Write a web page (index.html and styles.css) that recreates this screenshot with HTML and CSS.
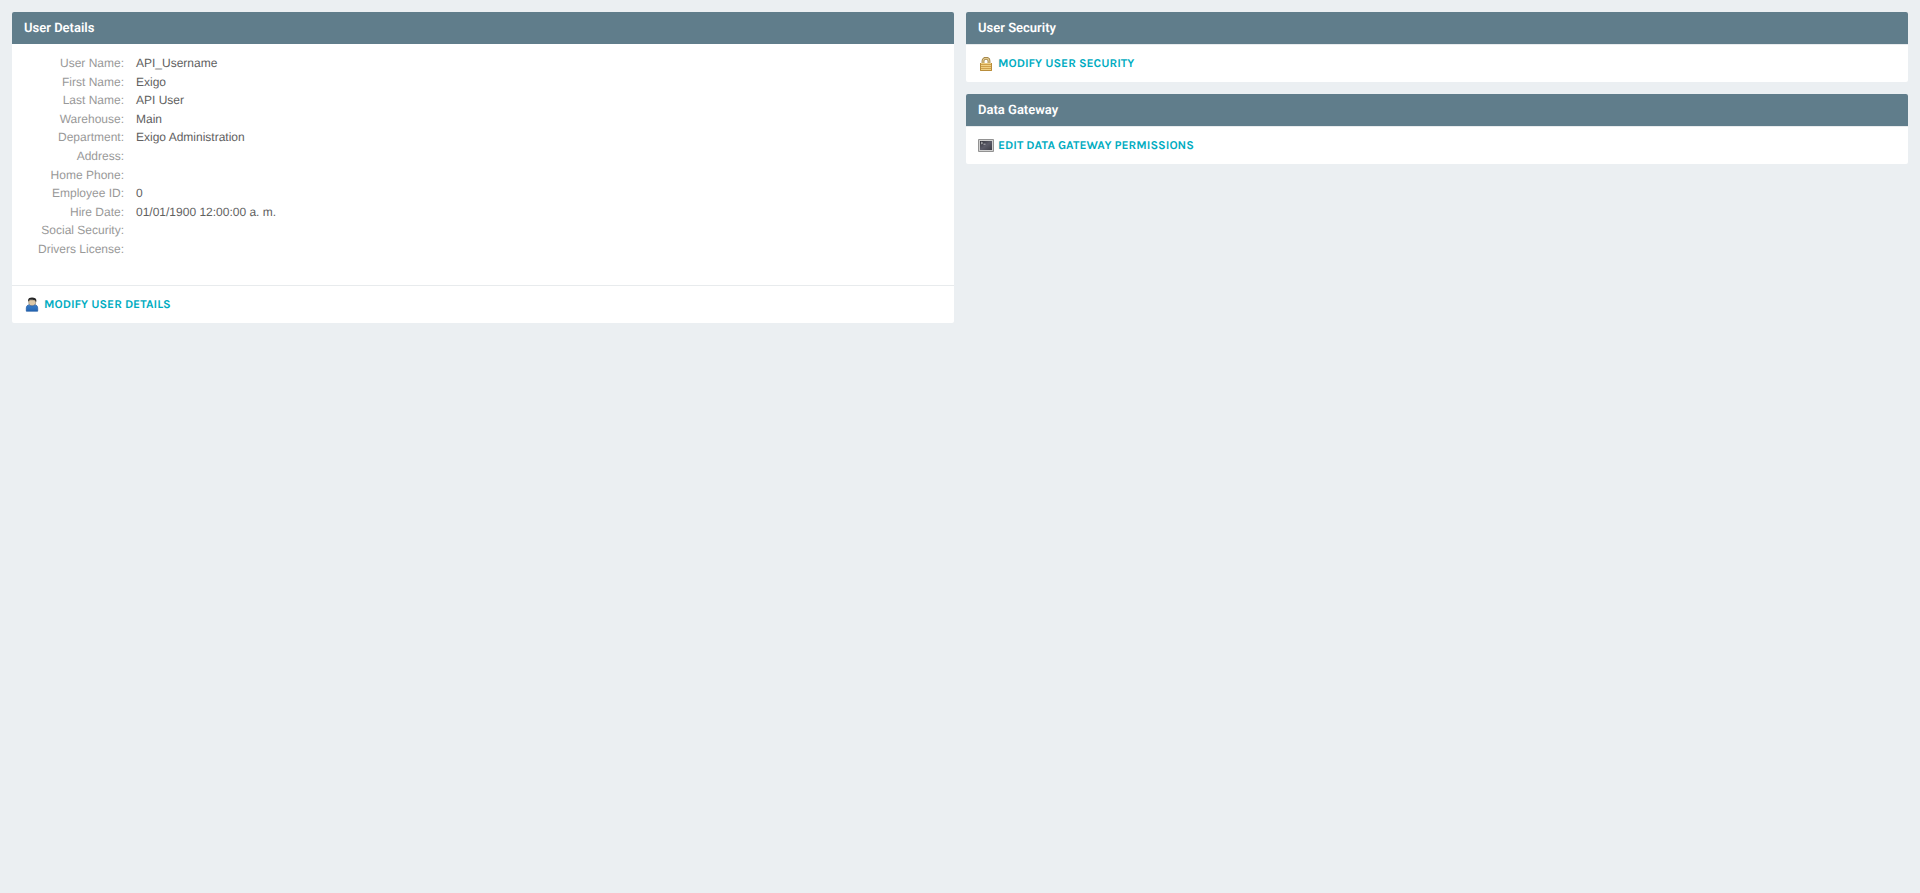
FILE: index.html
```html
<!DOCTYPE html>
<html lang="en">
<head>
    <meta charset="UTF-8">
    <meta name="viewport" content="width=device-width, initial-scale=1">
    <title>User Details</title>
    <link rel="stylesheet" href="styles.css">
</head>
<body>
    <main class="columns">
        <div class="column">
            <!-- User Details -->
            <section class="panel">
                <h2 class="panel-heading">User Details</h2>
                <dl class="details">
                    <dt>User Name:</dt>
                    <dd>API_Username</dd>
                    <dt>First Name:</dt>
                    <dd>Exigo</dd>
                    <dt>Last Name:</dt>
                    <dd>API User</dd>
                    <dt>Warehouse:</dt>
                    <dd>Main</dd>
                    <dt>Department:</dt>
                    <dd>Exigo Administration</dd>
                    <dt>Address:</dt>
                    <dd></dd>
                    <dt>Home Phone:</dt>
                    <dd></dd>
                    <dt>Employee ID:</dt>
                    <dd>0</dd>
                    <dt>Hire Date:</dt>
                    <dd>01/01/1900 12:00:00 a. m.</dd>
                    <dt>Social Security:</dt>
                    <dd></dd>
                    <dt>Drivers License:</dt>
                    <dd></dd>
                </dl>
                <div class="panel-footer">
                    <a href="#">
                        <svg class="icon" viewBox="0 0 16 16" aria-hidden="true">
                            <defs>
                                <linearGradient id="shirt" x1="0" y1="0" x2="0" y2="1">
                                    <stop offset="0" stop-color="#3a7cc6"/>
                                    <stop offset="1" stop-color="#2466b4"/>
                                </linearGradient>
                            </defs>
                            <path d="M4.800 3h6.800v3c0 2-1.300 3.300-3.300 3.300S4.800 8 4.800 6z" fill="#dcc7a6" stroke="#7d6a50" stroke-width=".5"/>
                            <path d="M2.300 14.200v-3c0-2.200 1.200-3.300 3-3.300.8 1.300 4.600 1.300 5.400 0 1.800 0 3 1.100 3 3.300v3z" fill="url(#shirt)" stroke="#1f57a0" stroke-width=".7"/>
                            <path d="M4.200 4.500V2.500C4.400 1.100 5.800.4 8 .4c2.800 0 4.300.9 4.300 2.700v1.700l-.8-.3-.4-1.300-2.700-.5-2.800.1-.5 1.100z" fill="#262626"/>
                        </svg>
                        Modify User Details
                    </a>
                </div>
            </section>
        </div>

        <div class="column">
            <!-- User Security -->
            <section class="panel">
                <h2 class="panel-heading">User Security</h2>
                <div class="panel-footer">
                    <a href="#">
                        <svg class="icon" viewBox="0 0 16 16" aria-hidden="true">
                            <path d="M5 7V4c0-3.600 6-3.600 6 0v3" fill="none" stroke="#9c7c3c" stroke-width="2.800"/>
                            <path d="M5 7V4c0-3.600 6-3.600 6 0v3" fill="none" stroke="#e2cb92" stroke-width="1.200"/>
                            <path d="M2 6h12v8H2z" fill="#dfb45a"/>
                            <path d="M3 6.500h10M3 8.500h10M3 10.500h10M3 12.500h10" stroke="#f0d083"/>
                            <path d="M3 7.500h10M3 9.500h10M3 11.500h10" stroke="#cfa04a"/>
                            <path d="M2.500 6v7.500h11V6" fill="none" stroke="#b88d3c"/>
                        </svg>
                        Modify User Security
                    </a>
                </div>
            </section>

            <!-- Data Gateway -->
            <section class="panel">
                <h2 class="panel-heading">Data Gateway</h2>
                <div class="panel-footer">
                    <a href="#">
                        <svg class="icon" viewBox="0 0 16 16" aria-hidden="true">
                            <defs>
                                <linearGradient id="screen" x1="0" y1="0" x2="1" y2="1">
                                    <stop offset="0" stop-color="#33333b"/>
                                    <stop offset=".5" stop-color="#5b5b68"/>
                                    <stop offset="1" stop-color="#3c3c46"/>
                                </linearGradient>
                            </defs>
                            <path d="M.5 .5h15v12H.5z" fill="#d0d0d0" stroke="#929292"/>
                            <path d="M2 2h12v9H2z" fill="url(#screen)"/>
                            <path d="M3 3l1.600 1L3 5M5.500 5.200h2" fill="none" stroke="#e2e2e2" stroke-width=".7"/>
                        </svg>
                        Edit Data Gateway Permissions
                    </a>
                </div>
            </section>
        </div>
    </main>
</body>
</html>
```
FILE: styles.css
```css
* {
    box-sizing: border-box;
}

body {
    margin: 0;
    padding: 12px;
    background: #ebeff2;
    color: #616161;
    font-family: "Liberation Sans", Arial, sans-serif;
    font-size: 12px;
    line-height: 1.55;
    text-rendering: geometricPrecision;
}

.columns {
    display: grid;
    grid-template-columns: 1fr 1fr;
    gap: 12px;
    align-items: start;
}

.column {
    display: grid;
    gap: 12px;
}

.panel {
    background: #fff;
    border-radius: 2px;
    overflow: hidden;
}

.panel-heading {
    margin: 0;
    padding: 7px 12px 5px;
    background: #607d8b;
    color: #fff;
    font-family: Roboto, sans-serif;
    font-size: 13px;
    font-weight: 600;
    line-height: 20px;
}

.details {
    display: grid;
    grid-template-columns: 100px 1fr;
    column-gap: 12px;
    margin: 0;
    padding: 10px 12px 26px;
}

.details dt {
    color: #999;
    text-align: right;
}

.details dd {
    margin: 0;
}

.panel-footer {
    display: flex;
    padding: 10px 12px 8px;
    border-top: 1px solid #e8ebed;
    line-height: 19px;
}

.panel-footer a {
    display: flex;
    align-items: center;
    gap: 4px;
    color: #00acc1;
    font-family: Karla, Roboto, sans-serif;
    font-weight: 700;
    text-decoration: none;
    text-transform: uppercase;
}

.panel-footer a:hover {
    text-decoration: underline;
}

.icon {
    width: 16px;
    height: 16px;
}

@media (max-width: 768px) {
    .columns {
        grid-template-columns: 1fr;
    }
}
```
